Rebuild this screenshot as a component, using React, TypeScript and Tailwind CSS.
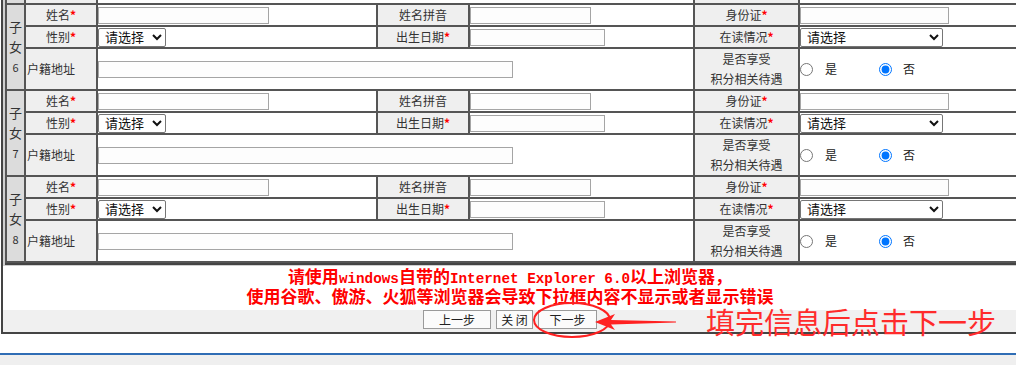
import React from 'react';

const cjk = '"Noto Sans CJK SC", "Liberation Sans", sans-serif';
const mono = '"Liberation Mono", monospace';

// label cell with optional red star
const Label = ({ text, req, align = 'center' }: { text: React.ReactNode; req?: boolean; align?: 'center' | 'left' }) => (
  <td className={`bg-[#efefef] p-0 text-[12px] text-[#333] ${align === 'left' ? 'text-left pl-px' : 'text-center'}`}>
    {text}
    {req && <span className="text-[#ff0000] font-bold">*</span>}
  </td>
);

const TextBox = ({ w }: { w: string }) => (
  <input type="text" className={`${w} h-[17px] block border border-[#a5a5a5] bg-[#fdfdfd] outline-none`} />
);

const Picker = ({ w }: { w: string }) => (
  <select
    defaultValue=""
    className={`${w} h-[19px] block border border-[#767676] rounded-[2px] bg-white text-[13px] py-0 text-[#111] pl-[2px]`}
    style={{ fontFamily: '"Liberation Sans", "Noto Sans CJK SC", sans-serif' }}
  >
    <option value="">请选择</option>
  </select>
);

const ChildGroup = ({ n }: { n: number }) => (
  <>
    <tr className="h-[20px]">
      <td rowSpan={3} className="bg-[#dcdcdc] p-0 text-center align-middle text-[13px] leading-[20px] text-[#333]">
        <div>子</div>
        <div>女</div>
        <div className="text-[11px]">{n}</div>
      </td>
      <Label text="姓名" req />
      <td className="bg-white p-0"><TextBox w="w-[171px]" /></td>
      <Label text="姓名拼音" />
      <td className="bg-white p-0"><TextBox w="w-[121px]" /></td>
      <Label text="身份证" req />
      <td className="bg-white p-0"><TextBox w="w-[149px]" /></td>
    </tr>
    <tr className="h-[20px]">
      <Label text="性别" req />
      <td className="bg-white p-0"><Picker w="w-[68px]" /></td>
      <Label text="出生日期" req />
      <td className="bg-white p-0"><TextBox w="w-[135px]" /></td>
      <Label text="在读情况" req />
      <td className="bg-white p-0"><Picker w="w-[143px]" /></td>
    </tr>
    <tr className="h-[40px]">
      <Label text="户籍地址" align="left" />
      <td colSpan={3} className="bg-white p-0"><TextBox w="w-[415px]" /></td>
      <td className="bg-[#efefef] p-0 text-center text-[12px] leading-[20px] text-[#333]">
        是否享受<br />积分相关待遇
      </td>
      <td className="bg-white p-0">
        <div className="flex items-center text-[12px] text-[#222]">
          <input type="radio" name={`jf${n}`} className="m-0 w-[13px] h-[13px]" />
          <span className="ml-[12px]">是</span>
          <input type="radio" name={`jf${n}`} defaultChecked className="m-0 ml-[42px] w-[13px] h-[13px] accent-[#0075ff]" />
          <span className="ml-[11px]">否</span>
        </div>
      </td>
    </tr>
  </>
);

const Btn = ({ w, children }: { w: string; children: React.ReactNode }) => (
  <button className={`${w} h-[19px] flex items-center justify-center border border-[#9a9a9a] bg-[#fbfbfb] text-[12px] leading-none text-[#222]`}>
    {children}
  </button>
);

export default function App() {
  return (
    <div className="relative w-[1016px] h-[365px] overflow-hidden bg-white" style={{ fontFamily: cjk }}>
      <div className="ml-px w-[1060px] border-l-2 border-b-2 border-[#444] -mt-[83px]">
        <div className="border-l-2 border-b border-[#cfcfcf]">
          <div className="border-b-2 border-[#444]">
            <table className="table-fixed w-[1047px] border-separate border-spacing-[2px] bg-[#555]">
              <colgroup>
                <col className="w-[17px]" />
                <col className="w-[70px]" />
                <col className="w-[278px]" />
                <col className="w-[90px]" />
                <col className="w-[223px]" />
                <col className="w-[103px]" />
                <col className="w-[250px]" />
              </colgroup>
              <tbody>
                {[5, 6, 7, 8].map((n) => (
                  <ChildGroup key={n} n={n} />
                ))}
              </tbody>
            </table>
          </div>
        </div>

        <div className="w-[1014px] h-[44px] text-center text-[17px] font-bold text-[#ff0000]">
          <div className="h-[20px] leading-[20px] whitespace-nowrap">
            请使用<span className="text-[14.3px] leading-[20px]" style={{ fontFamily: mono }}>windows</span>自带的
            <span className="text-[14.3px] leading-[20px]" style={{ fontFamily: mono }}>Internet Explorer 6.0</span>以上浏览器，
          </div>
          <div className="h-[20px] leading-[20px] whitespace-nowrap">使用谷歌、傲游、火狐等浏览器会导致下拉框内容不显示或者显示错误</div>
        </div>

        <div className="h-[22px] bg-[#f0f0f0] pl-[420px] flex gap-[5px] items-start">
          <Btn w="w-[68px]">上一步</Btn>
          <Btn w="w-[37px]">关 闭</Btn>
          <Btn w="w-[59px]">下一步</Btn>
        </div>
      </div>

      <div className="mt-[19px] h-[2px] bg-[#2f6db5]" />
      <div className="h-[20px] bg-[#efefef]" />

      {/* red annotation drawn over the screenshot */}
      <svg className="absolute left-0 top-0 pointer-events-none" width="1016" height="365">
        <ellipse cx="572" cy="320" rx="38" ry="17" fill="none" stroke="#ff2020" strokeWidth="2" />
        <polygon points="595,322 615,314 611,320 676,321.6 676,322.4 611,324.6 615,330" fill="#ff2020" />
      </svg>
      <div className="absolute left-[706px] top-[303px] text-[29px] leading-[36px] text-[#ff2b2b]">填完信息后点击下一步</div>
    </div>
  );
}
